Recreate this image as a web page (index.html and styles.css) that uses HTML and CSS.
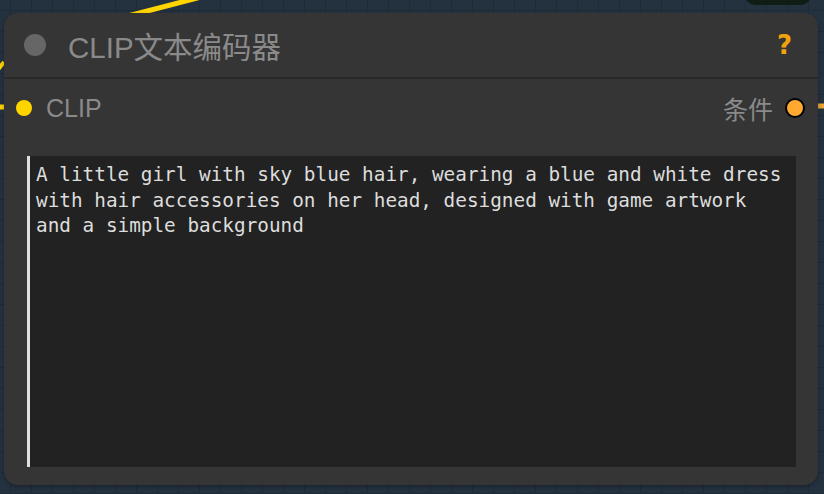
FILE: index.html
```html
<!DOCTYPE html>
<html>
<head>
	<title>CLIP文本编码器</title>
	<link rel="stylesheet" href="styles.css">
</head>
<body>
	<div class="canvas">
		<svg class="wires" width="824" height="494" viewBox="0 0 824 494">
			<path d="M128 16 L205 -4" stroke="#ffd500" stroke-width="5" fill="none"/>
			<path d="M-4 72 L4 62" stroke="#ffd500" stroke-width="4" fill="none"/>
			<path d="M0 107 L6 107" stroke="#ffd500" stroke-width="5" fill="none"/>
			<path d="M816 106 L824 106" stroke="#e8a33a" stroke-width="5" fill="none"/>
		</svg>
		<div class="other-node"></div>

		<div class="node">
			<div class="node-title">
				<span class="title-dot"></span>
				<span class="title-text">CLIP文本编码器</span>
				<span class="help">?</span>
			</div>
			<div class="slots">
				<div class="slot">
					<span class="slot-dot input"></span>
					<span class="slot-label">CLIP</span>
				</div>
				<div class="slot">
					<span class="slot-label">条件</span>
					<span class="slot-dot output"></span>
				</div>
			</div>
			<div class="prompt">A little girl with sky blue hair, wearing a blue and white dress with hair accessories on her head, designed with game artwork and a simple background</div>
		</div>
	</div>
</body>
</html>
```

FILE: styles.css
```css
body {
	margin: 0;
	background-color: #243240;
	font-family: "Liberation Sans", "Noto Sans CJK SC", sans-serif;
}

.canvas {
	position: relative;
	width: 824px;
	height: 494px;
	overflow: hidden;
	background-color: #243240;
	background-image:
		linear-gradient(to right, #1f2b37 1px, transparent 1px),
		linear-gradient(to bottom, #1f2b37 1px, transparent 1px);
	background-size: 21px 21px;
	background-position: 10px 10px;
}

.wires {
	position: absolute;
	left: 0;
	top: 0;
}

.other-node {
	position: absolute;
	left: 745px;
	top: -20px;
	width: 66px;
	height: 25px;
	border-radius: 10px;
	background-color: #0f1d14;
}

.node {
	position: absolute;
	left: 4px;
	top: 13px;
	width: 814px;
	height: 472px;
	border-radius: 14px;
	background-color: #353535;
	display: flex;
	flex-direction: column;
	box-shadow: 0 2px 4px rgba(0,0,0,0.3);
}

.node-title {
	height: 64px;
	display: flex;
	align-items: center;
	border-bottom: 2px solid #292929;
	padding: 0 26px 0 20px;
}

.title-dot {
	width: 22px;
	height: 22px;
	border-radius: 50%;
	background-color: #666;
}

.title-text {
	margin-left: 22px;
	font-size: 29.5px;
	color: #8a8a8a;
	flex: 1;
}

.help {
	color: #f2a20c;
	font-size: 26px;
	font-weight: bold;
	font-family: "DejaVu Sans", sans-serif;
}

.slots {
	display: flex;
	justify-content: space-between;
	align-items: center;
	height: 58px;
	padding: 0 13px 0 12px;
}

.slot {
	display: flex;
	align-items: center;
}

.slot-label {
	font-size: 25px;
	color: #8a8a8a;
}

.slot-dot {
	width: 16px;
	height: 16px;
	border-radius: 50%;
}

.slot-dot.input {
	background-color: #ffd500;
	margin-right: 14px;
}

.slot-dot.output {
	background-color: #ffa931;
	border: 2px solid #000;
	margin-left: 12px;
}

.prompt {
	flex: 1;
	margin: 19px 22px 18px 23px;
	background-color: #222;
	border-left: 3px solid #e0e0e0;
	padding: 6px 10px 0 6px;
	font-family: "DejaVu Sans Mono", monospace;
	font-size: 19.35px;
	line-height: 25.5px;
	color: #ddd;
}
```
